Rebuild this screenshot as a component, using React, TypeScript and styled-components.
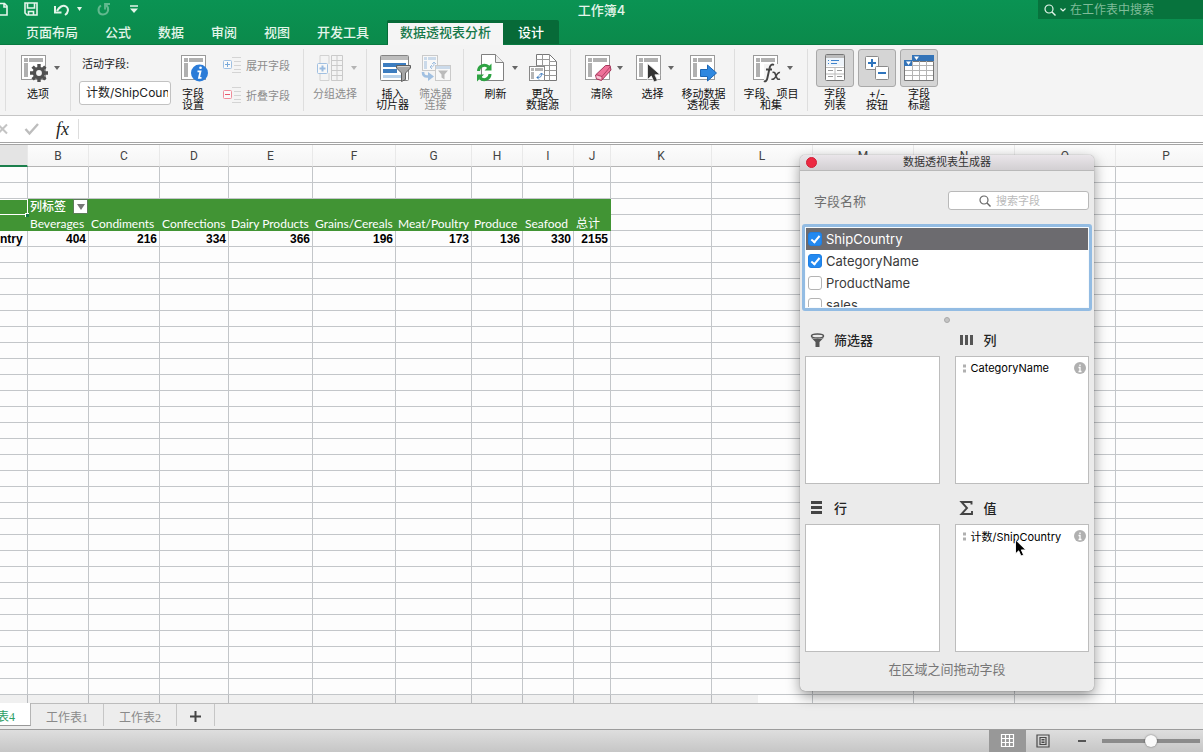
import React from "react";
import styled, { createGlobalStyle, css } from "styled-components";

const CJK = '"Noto Sans CJK SC", sans-serif';
const UI = `Inter, ${CJK}`;

const GlobalStyle = createGlobalStyle`
  *, *::before, *::after { box-sizing: border-box; }
  body { margin: 0; font-family: ${UI}; font-size: 12px; color: #222; }
  button, input { font: inherit; color: inherit; margin: 0; padding: 0; }
  button { border: 0; background: none; }
  svg { display: block; flex: none; overflow: visible; }
`;

const Window = styled.div`
  position: relative;
  display: flex;
  flex-direction: column;
  height: 100vh;
  min-height: 600px;
  overflow: hidden;
  background: #fdfdfd;
`;

/* ---------- title bar and tabs ---------- */

const TopChrome = styled.header`
  background: linear-gradient(#0a9353, #0b8a4b);
  border-bottom: 1px solid #087a41;
  flex: none;
  color: #e4f5ea;
`;

const TitleBar = styled.div`
  display: grid;
  grid-template-columns: 1fr auto 1fr;
  height: 20px;
`;

const QuickAccess = styled.div`
  display: flex;
  align-items: center;
  height: 18px;
`;

const QuickButton = styled.button<{ $width: number; $dim?: boolean }>`
  width: ${(p) => p.$width}px;
  height: 18px;
  display: flex;
  align-items: center;
  opacity: ${(p) => (p.$dim ? 0.4 : 1)};
`;

const DocTitle = styled.h1`
  margin: 0;
  font-size: 13px;
  line-height: 20px;
  font-weight: 500;
`;

const SheetSearch = styled.label`
  justify-self: end;
  display: flex;
  align-items: center;
  gap: 4px;
  width: 165px;
  height: 19px;
  padding-left: 6px;
  background: #07733d;
  input {
    flex: 1;
    min-width: 0;
    border: 0;
    outline: 0;
    background: none;
    font-size: 12px;
    line-height: 18px;
  }
  input::placeholder { color: #7fbc99; opacity: 1; }
`;

const TabRow = styled.nav`
  display: flex;
  height: 24px;
  padding-left: 26px;
  font-size: 13px;
  line-height: 24px;
  font-weight: 500;
`;

const TabList = styled.div`
  display: flex;
  gap: 27px;
  margin-right: 18px;
`;

const Tab = styled.button`
  white-space: nowrap;
`;

const ContextTabs = styled.div`
  display: flex;
  background: #076a38;
  border-left: 1px solid #076a38;
  border-radius: 2px 2px 0 0;
`;

const ContextTab = styled.button<{ $active?: boolean }>`
  padding: 0 ${(p) => (p.$active ? 12 : 15)}px;
  white-space: nowrap;
  color: #fff;
  ${(p) =>
    p.$active &&
    css`
      margin-top: 3px;
      margin-bottom: -1px;
      padding-bottom: 3px;
      line-height: 19px;
      background: #f5f5f5;
      color: #17784a;
    `}
`;

/* ---------- ribbon ---------- */

const Ribbon = styled.div`
  display: flex;
  flex: none;
  height: 71px;
  padding: 4px 0;
  background: #f4f4f4;
  border-bottom: 1px solid #c6c6c6;
`;

const Group = styled.section<{ $width?: number; $start?: number }>`
  display: flex;
  flex: none;
  width: ${(p) => (p.$width ? p.$width + "px" : "auto")};
  justify-content: ${(p) => (p.$start ? "flex-start" : "center")};
  padding-left: ${(p) => p.$start ?? 0}px;
  border-right: ${(p) => (p.$width ? "1px solid #dedede" : "0")};
`;

const Tool = styled.button<{ $width: number; $disabled?: boolean }>`
  display: flex;
  flex-direction: column;
  align-items: center;
  flex: none;
  width: ${(p) => p.$width}px;
  font-size: 11px;
  line-height: 11px;
  white-space: nowrap;
  color: ${(p) => (p.$disabled ? "#8c8c8c" : "#111")};
  svg, i { opacity: ${(p) => (p.$disabled ? 0.45 : 1)}; }
`;

const ToolFace = styled.span<{ $pressed?: boolean }>`
  display: flex;
  align-items: center;
  justify-content: center;
  gap: 7px;
  height: 38px;
  margin-bottom: 2px;
  ${(p) =>
    p.$pressed &&
    css`
      width: 38px;
      background: #d5d5d5;
      border: 1px solid #a9a9a9;
      border-radius: 3px;
    `}
`;

const Caret = styled.i`
  margin-right: -4px;
  border: 3px solid transparent;
  border-top: 4px solid #666;
  border-bottom: 0;
`;

const FieldColumn = styled.label`
  display: flex;
  flex-direction: column;
  width: 92px;
  font-size: 11px;
  line-height: 30px;
  color: #222;
  span { padding-left: 3px; }
  input {
    width: 100%;
    height: 24px;
    margin-top: 2px;
    padding: 0 2px 0 6px;
    border: 1px solid #c2c2c2;
    border-radius: 3px;
    background: #fff;
    font-size: 12px;
  }
`;

const StackedTools = styled.div`
  display: flex;
  flex-direction: column;
  padding-top: 1px;
  margin-left: 8px;
`;

const SmallTool = styled.button`
  display: flex;
  align-items: center;
  gap: 4px;
  height: 30px;
  font-size: 11px;
  color: #8c8c8c;
  white-space: nowrap;
`;

/* ---------- formula bar ---------- */

const FormulaBar = styled.div`
  display: flex;
  align-items: center;
  flex: none;
  height: 29px;
  background: #fff;
  border-bottom: 3px double #a4a4a4;
  button { display: flex; }
  input {
    flex: 1;
    height: 20px;
    margin-left: 7px;
    border: 0;
    border-left: 1px solid #ddd;
    outline: 0;
    background: none;
  }
`;

const FxButton = styled.button`
  width: 15px;
  margin-left: 17px;
  && { font: italic 18px/22px "Liberation Serif", serif; }
  color: #222;
`;

/* ---------- sheet ---------- */

const SheetArea = styled.main`
  position: relative;
  flex: 1;
  min-height: 0;
  overflow: hidden;
`;

const ScrollTrack = styled.div`
  position: absolute;
  left: 0;
  bottom: 0;
  width: 63%;
  height: 8px;
  background: rgba(0, 0, 0, 0.05);
`;

const Grid = styled.table`
  table-layout: fixed;
  width: 1217px;
  border-collapse: separate;
  border-spacing: 0;
  font-family: Lato, ${CJK};
  font-size: 12px;
  line-height: 13px;
`;

const ColHead = styled.th<{ $selected?: boolean }>`
  height: 22px;
  padding: 1px 0 0;
  background: ${(p) => (p.$selected ? "#e4e4e4" : "linear-gradient(#fcfcfc, #f5f5f5)")};
  border-bottom: ${(p) => (p.$selected ? "2px solid #1b7f4c" : "1px solid #b5b5b5")};
  border-right: 1px solid #e9e9e9;
  font-family: Roboto, ${CJK};
  font-weight: 400;
  color: #444;
`;

const Cell = styled.td<{ $filled?: boolean; $flush?: boolean }>`
  height: 16px;
  padding: ${(p) => (p.$flush ? 0 : 2)}px 2px 0;
  border-right: 1px solid #c3c6c9;
  border-bottom: 1px solid #c3c6c9;
  white-space: nowrap;
  ${(p) =>
    p.$filled &&
    css`
      background: #419434;
      border-color: #419434;
      color: #fff;
    `}
`;

const NumberCell = styled(Cell)`
  text-align: right;
  font-family: "Liberation Sans", ${CJK};
  font-weight: 700;
  color: #000;
`;

const RowLabel = styled(NumberCell)`
  padding-left: 0;
  padding-right: 5px;
`;

const ActiveCell = styled(Cell)`
  position: relative;
  border-top: 1px solid #fff;
  border-right: 1px solid #fff;
  border-bottom: 1px solid #fff;
  &::after {
    content: "";
    position: absolute;
    right: -2px;
    bottom: -3px;
    width: 4px;
    height: 4px;
    background: #187a47;
    border-left: 1px solid #fff;
    border-top: 1px solid #fff;
  }
`;

const FilterHead = styled.div`
  display: flex;
  justify-content: space-between;
  align-items: center;
  height: 15px;
  line-height: 15px;
  font-weight: 500;
  margin-right: -2px;
`;

const FilterButton = styled.button`
  display: flex;
  align-items: center;
  justify-content: center;
  width: 15px;
  height: 15px;
  background: #fff;
  border: 1px solid #5c7d58;
  i {
    border: 4px solid transparent;
    border-top: 6px solid #777;
    border-bottom: 0;
  }
`;

/* ---------- bottom bars ---------- */

const SheetTabs = styled.nav`
  display: flex;
  flex: none;
  height: 27px;
  background: #ededed;
  border-top: 1px solid #bcbcbc;
  border-bottom: 1px solid #9c9c9c;
  font-family: "Liberation Serif", ${CJK};
`;

const SheetTab = styled.button<{ $active?: boolean }>`
  height: 22px;
  padding: 5px 15px 0;
  font-size: 12px;
  line-height: 16px;
  color: #8a8a8a;
  border-right: 1px solid #c6c6c6;
  ${(p) =>
    p.$active &&
    css`
      width: 31px;
      height: 23px;
      margin-top: -1px;
      padding: 6px 15px 0 0;
      display: flex;
      justify-content: flex-end;
      white-space: nowrap;
      background: #fff;
      color: #2fa066;
      border-right: 1px solid #b5b5b5;
      border-bottom: 1px solid #999;
    `}
`;

const AddSheet = styled.button`
  display: flex;
  align-items: center;
  justify-content: center;
  width: 38px;
  height: 22px;
  padding-top: 3px;
  border-right: 1px solid #c6c6c6;
`;

const StatusBar = styled.footer`
  display: flex;
  align-items: center;
  justify-content: flex-end;
  flex: none;
  height: 22px;
  padding-right: 3px;
  background: linear-gradient(#dedede, #c6c6c6);
`;

const ViewButton = styled.button<{ $active?: boolean }>`
  display: flex;
  align-items: center;
  justify-content: center;
  width: ${(p) => (p.$active ? 37 : 34)}px;
  height: 22px;
  background: ${(p) => (p.$active ? "#989898" : "none")};
`;

const ZoomOut = styled.button`
  width: 8px;
  height: 2px;
  margin: 0 16px 0 18px;
  background: #555;
`;

const ZoomSlider = styled.input`
  appearance: none;
  width: 98px;
  height: 14px;
  background: linear-gradient(#8b8b8b, #8b8b8b) center / 100% 4px no-repeat;
  &::-webkit-slider-thumb {
    appearance: none;
    width: 12px;
    height: 12px;
    border-radius: 50%;
    background: #fafafa;
    box-shadow: 0 0 2px rgba(0, 0, 0, 0.5);
  }
`;

/* ---------- floating field builder ---------- */

const Builder = styled.aside`
  position: absolute;
  top: 155px;
  right: 109px;
  width: 294px;
  padding-bottom: 12px;
  background: #ebebeb;
  border-radius: 5px;
  box-shadow: 0 0 1px rgba(0, 0, 0, 0.5), 0 5px 14px rgba(0, 0, 0, 0.4);
`;

const BuilderTitle = styled.div`
  display: grid;
  grid-template-columns: 1fr auto 1fr;
  align-items: center;
  height: 16px;
  padding: 0 6px;
  background: linear-gradient(#eae6ea, #d2cfd2);
  border-bottom: 1px solid #b9b9b9;
  border-radius: 5px 5px 0 0;
  h2 {
    margin: 0;
    font-size: 11px;
    line-height: 15px;
    font-weight: 400;
    color: #333;
  }
`;

const CloseButton = styled.button`
  width: 11px;
  height: 11px;
  border-radius: 50%;
  background: #ec2942;
  border: 1px solid #d01e36;
`;

const FieldsHead = styled.div`
  display: flex;
  align-items: center;
  justify-content: space-between;
  height: 59px;
  padding: 0 5px 0 14px;
  font-size: 13px;
  color: #6f6f6f;
`;

const FieldSearch = styled.label`
  display: flex;
  align-items: center;
  justify-content: center;
  gap: 5px;
  width: 141px;
  height: 19px;
  background: #fff;
  border: 1px solid #b9b9b9;
  border-radius: 3px;
  input {
    width: 62px;
    border: 0;
    outline: 0;
    background: none;
    font-size: 11px;
    line-height: 16px;
  }
  input::placeholder { color: #bababa; opacity: 1; }
`;

const FieldList = styled.div`
  height: 87px;
  margin: -6px 2px 0;
  padding: 1px;
  border: 3px solid #93bce3;
  border-radius: 3px;
  background: #f7fafc;
  overflow: hidden;
`;

const FieldViewport = styled.div`
  height: 79px;
  overflow: hidden;
  background: #fff;
`;

const FieldRow = styled.label<{ $selected?: boolean }>`
  display: flex;
  align-items: center;
  gap: 4px;
  height: 22px;
  padding-left: 2px;
  font-size: 13px;
  line-height: 22px;
  background: ${(p) => (p.$selected ? "#6c6b6f" : "#fff")};
  color: ${(p) => (p.$selected ? "#fff" : "#3a3a3a")};
`;

const Check = styled.input`
  appearance: none;
  position: relative;
  width: 14px;
  height: 14px;
  background: #fff;
  border: 1px solid #b4b4b4;
  border-radius: 3px;
  &:checked {
    background: #2389f0;
    border-color: #1f7fe2;
  }
  &:checked::after {
    content: "";
    position: absolute;
    left: 4px;
    top: 1px;
    width: 5px;
    height: 9px;
    border: solid #fff;
    border-width: 0 2px 2px 0;
    transform: rotate(40deg);
  }
`;

const Splitter = styled.div`
  width: 6px;
  height: 6px;
  margin: 6px auto 3px;
  border-radius: 50%;
  background: #c4c4c4;
  border: 1px solid #a9a9a9;
`;

const Zones = styled.div`
  display: grid;
  grid-template-columns: 1fr 1fr;
  column-gap: 15px;
  row-gap: 10px;
  padding: 0 5px;
`;

const Zone = styled.section`
  h3 {
    display: flex;
    align-items: center;
    gap: 9px;
    height: 30px;
    margin: 0;
    padding: 0 0 3px 5px;
    font-size: 13px;
    font-weight: 500;
    color: #222;
  }
`;

const DropBox = styled.div`
  height: 128px;
  background: #fff;
  border: 1px solid #bdbdbd;
`;

const Pill = styled.div`
  display: flex;
  align-items: center;
  height: 22px;
  padding: 0 2px 0 7px;
  font-size: 11px;
  color: #000;
  span { flex: 1; margin-left: 5px; }
  button { display: flex; }
`;

const BuilderHint = styled.p`
  margin: 7px 0 0;
  text-align: center;
  font-size: 13px;
  line-height: 20px;
  color: #777;
`;

const Pointer = styled.svg`
  position: absolute;
  top: 384px;
  left: 215px;
`;

/* ---------- icons ---------- */

const Icon = ({ w = 28, h = 28, children }: { w?: number; h?: number; children: React.ReactNode }) => (
  <svg width={w} height={h} viewBox={`0 0 ${w} ${h}`} fill="none" aria-hidden="true">
    {children}
  </svg>
);

const PivotFrame = () => (
  <>
    <rect x="0.5" y="1.5" width="24" height="24" fill="#fff" stroke="#9a9a9a" />
    <path d="M3 4h4v4H3zM8 4h14v4H8zM3 9h4v14H3z" fill="#b0b0b0" />
  </>
);

const GearPivot = () => (
  <Icon w={26}>
    <PivotFrame />
    <g transform="translate(18 19)" stroke="#505050">
      <circle r="4.6" strokeWidth="3.4" fill="#f4f4f4" />
      <g strokeWidth="3.4">
        {[0, 45, 90, 135].map((a) => (
          <path key={a} d="M0 -9V-5.5M0 5.5V9" transform={`rotate(${a})`} />
        ))}
      </g>
    </g>
  </Icon>
);

const InfoPivot = () => (
  <Icon w={25}>
    <PivotFrame />
    <circle cx="18.500" cy="19" r="8.500" fill="#2b7cd8" />
    <path d="M19.500 13.700h.1" stroke="#fff" strokeWidth="2.600" strokeLinecap="round" />
    <path d="M16.500 17.300h3l-1.500 6.500h2.500" stroke="#fff" strokeWidth="1.800" />
  </Icon>
);

const ExpandIcon = ({ minus }: { minus?: boolean }) => (
  <Icon w={19} h={18}>
    <path d="M9 1.500h9M11 5.500h7M11 9.500h7M11 13.500h7M9 16.500h9" stroke="#d4d4d4" />
    <rect x="0.500" y="4.500" width="8" height="8" rx="1" fill="#fafafa" stroke={minus ? "#f08c9b" : "#9fc0e2"} />
    <path d={minus ? "M2 8.500h5" : "M2 8.500h5M4.500 6v5"} stroke={minus ? "#e8566c" : "#77a8da"} />
  </Icon>
);

const GroupIcon = () => (
  <Icon w={27}>
    <path d="M14.500 1.500h11v25h-11zM20 1.500v25M14.500 6.500h11M14.500 11.500h11M14.500 16.500h11M14.500 21.500h11" stroke="#999" />
    <path d="M3 10V1.500h9V10M3 19v7.500h9V19" stroke="#aaa" />
    <rect x="0.500" y="9.500" width="10" height="10" rx="1" fill="#fff" stroke="#3d82cc" />
    <path d="M2.500 14.500h6M5.500 11.500v6" stroke="#2f78c8" strokeWidth="2" />
  </Icon>
);

const SlicerIcon = () => (
  <Icon w={26}>
    <rect x="0.500" y="1.500" width="28" height="25" rx="1" fill="#fff" stroke="#858585" />
    <path d="M1 2h27v4H1z" fill="#bdbdbd" />
    <path d="M3 9h23v4H3zM3 15h14v4H3z" fill="#3c7dc0" />
    <path d="M3 21h23v3H3z" fill="#b9d2ea" />
    <path d="M16.500 11.500h14v2.500l-5 5v6.500l-4 2V19l-5-5z" fill="#a6a6a6" stroke="#5f5f5f" />
    <path d="M17.500 12.500h12" stroke="#d4d4d4" />
  </Icon>
);

const FilterLinkIcon = () => (
  <Icon w={30}>
    <rect x="1.500" y="1.500" width="15" height="15" fill="#fff" stroke="#999" />
    <path d="M3 3h3v3H3zM7 3h8v3H7zM3 7h3v8H3z" fill="#9abbe0" />
    <path d="M9 13c4 0 4-1 4-5M13 8l-2 2M13 8l2 2M9 13l2-2M9 13l2 2" stroke="#3d82cc" />
    <rect x="14.500" y="11.500" width="15" height="15" fill="#fff" stroke="#999" />
    <path d="M15 12h14v3H15z" fill="#9abbe0" />
    <path d="M17 16.500h10l-3.500 4v5l-3-2v-3z" fill="#777" />
    <path d="M2 18q0 4.500 4 4.500h2" stroke="#3d82cc" strokeWidth="2.600" />
    <path d="M7 18l6 4.500-6 4.500z" fill="#3d82cc" />
  </Icon>
);

const RefreshIcon = () => (
  <Icon>
    <path d="M4.500 0.500h14l8 8v18h-22z" fill="#fff" stroke="#808080" />
    <path d="M18.500 0.500v8h8" fill="#eee" stroke="#808080" />
    <g stroke="#2ea343" strokeWidth="3">
      <path d="M1.500 17c0-5 6-7.500 10-4" />
      <path d="M13 20c0 5-6 7.500-10 4" />
    </g>
    <path d="M14.500 9.500v7h-7zM0 27.500v-7h7z" fill="#2ea343" />
  </Icon>
);

const SourceIcon = () => (
  <Icon>
    <path d="M7.500 0.500h13l7 7v19h-20z" fill="#fff" stroke="#777" />
    <path d="M20.500 0.500v7h7M7.500 5.500h13M7.500 11.500h20M7.500 16.500h20M7.500 21.500h20M13.500 0.500v26M20.500 7.500v19" stroke="#999" />
    <rect x="0.500" y="12.500" width="15" height="14" fill="#fff" stroke="#888" />
    <path d="M2 14h3v3H2zM6 14h8v3H6zM2 18h3v7H2z" fill="#b5b5b5" />
    <path d="M8 23.500c4 0 4.500-1 4.500-4M12.500 19l-2 2M12.500 19l2 2M8 23.500l2-2M8 23.500l2 2" stroke="#3777bd" />
  </Icon>
);

const EraserIcon = () => (
  <Icon w={25}>
    <PivotFrame />
    <path d="M10.500 21 20.500 11.500h4.500l1 4.500-9.500 10.500-5-1.500z" fill="#ee7199" stroke="#a3375b" />
    <path d="M11 20.500l6 2L25.500 12.500M17 22.500v3.500" stroke="#a3375b" strokeWidth=".8" />
    <path d="M11.300 21.500l5 1.600v2.300l-4.500-1.200z" fill="#f9c6d5" />
  </Icon>
);

const SelectIcon = () => (
  <Icon w={25}>
    <PivotFrame />
    <path d="M11.500 9.500v16l3.800-3.500 2.700 6 3.500-1.500-2.600-5.700h5.300z" fill="#333" stroke="#f4f4f4" strokeWidth=".8" />
  </Icon>
);

const MoveIcon = () => (
  <Icon w={27}>
    <PivotFrame />
    <path d="M10.500 15.500h7v-4.500l9 8-9 8v-4.500h-7z" fill="#2f88e0" stroke="#1c66b4" />
  </Icon>
);

const FxPivotIcon = () => (
  <Icon w={27}>
    <PivotFrame />
    <rect x="11" y="10" width="17" height="18" fill="#f4f4f4" />
    <path d="M21 10.800c-2.500-1-4 .7-4.500 3.700l-2 9c-.500 3-2 4.500-3.500 3.500M13 15.500h6" stroke="#444" strokeWidth="1.900" />
    <path d="M19.500 18.500c2.500-1 2.500 1 3.500 3.500s1.500 4 4 3M27 18.500c-2-.500-3 1.500-4 3.500s-2.500 4-4.500 3" stroke="#444" strokeWidth="1.600" />
  </Icon>
);

const FieldListIcon = () => (
  <Icon w={22}>
    <rect x="1.500" y="0.500" width="19" height="26" rx="1" fill="#fff" stroke="#777" />
    <path d="M2 1h18v3H2z" fill="#bbb" />
    <path d="M2 4h18v8H2z" fill="#eef4fa" />
    <path d="M4 6.500h1M7 6.500h8M4 9.500h1M7 9.500h6" stroke="#3d82cc" />
    <path d="M2 13.500h18M11 14v12M2 20h18" stroke="#bbb" />
    <path d="M4 16.500h5M13 16.500h5M4 22.500h5M13 22.500h5" stroke="#999" />
  </Icon>
);

const PlusMinusIcon = () => (
  <Icon w={24} h={24}>
    <rect x="0.500" y="0.500" width="13" height="13" rx="1" fill="#fff" stroke="#8a8a8a" />
    <path d="M3 7h8M7 3v8" stroke="#2f75bd" strokeWidth="2" />
    <rect x="10.500" y="10.500" width="13" height="13" rx="1" fill="#fff" stroke="#8a8a8a" />
    <path d="M13 17h8" stroke="#2f75bd" strokeWidth="2" />
  </Icon>
);

const HeadersIcon = () => (
  <Icon w={30} h={26}>
    <path d="M0.500 6.500h29v19h-29z" fill="#fff" stroke="#777" />
    <path d="M8.500 6v19M15.500 6v19M22.500 6v19M1 10.500h28M1 15.500h28M1 20.500h28" stroke="#b4b4b4" />
    <path d="M0 5h8v6H0zM8 0h22v6H8z" fill="#3474b8" />
    <path d="M2 6.500h5l-2.500 3.500zM10 1.500h5L12.500 5z" fill="#fff" />
  </Icon>
);

const Magnifier = ({ color }: { color: string }) => (
  <Icon w={12} h={12}>
    <circle cx="5" cy="5" r="4" stroke={color} strokeWidth="1.200" />
    <path d="M8 8l3.500 3.500" stroke={color} strokeWidth="1.400" />
  </Icon>
);

const InfoDot = () => (
  <Icon w={12} h={12}>
    <circle cx="6" cy="6" r="6" fill="#b0b0b0" />
    <path d="M6 2.500v1.500M4.500 5.500H6V9.500M4.500 9.500h3" stroke="#fff" strokeWidth="1.300" />
  </Icon>
);

const Grip = () => (
  <Icon w={3} h={9}>
    <path d="M0 0.500h3v3H0zM0 5.500h3v3H0z" fill="#b0b0b0" />
  </Icon>
);

/* ---------- data ---------- */

const columns = [
  ["", 28], ["B", 61], ["C", 71], ["D", 69], ["E", 84], ["F", 83], ["G", 76], ["H", 51],
  ["I", 51], ["J", 37], ["K", 101], ["L", 101], ["M", 101], ["N", 101], ["O", 101], ["P", 101],
] as const;

const categories = [
  "Beverages", "Condiments", "Confections", "Dairy Products", "Grains/Cereals",
  "Meat/Poultry", "Produce", "Seafood", "总计",
];
const counts = [404, 216, 334, 366, 196, 173, 136, 330, 2155];

const blanks = (n: number) => Array.from({ length: n }, (_, i) => <Cell key={"blank" + i} />);

const RibbonTool = ({
  width, icon, lines, caret, disabled, pressed,
}: {
  width: number; icon: React.ReactNode; lines: string[]; caret?: boolean; disabled?: boolean; pressed?: boolean;
}) => (
  <Tool $width={width} $disabled={disabled} type="button" aria-pressed={pressed}>
    <ToolFace $pressed={pressed}>
      {icon}
      {caret && <Caret />}
    </ToolFace>
    {lines.map((l) => (
      <span key={l}>{l}</span>
    ))}
  </Tool>
);

const fields = [
  { name: "ShipCountry", checked: true, selected: true },
  { name: "CategoryName", checked: true },
  { name: "ProductName", checked: false },
  { name: "sales", checked: false },
];

export default function App() {
  return (
    <Window>
      <GlobalStyle />
      <TopChrome>
        <TitleBar>
          <QuickAccess>
            <QuickButton $width={24} aria-label="新建">
              <Icon w={8} h={14}>
                <path d="M0 1.500h4.500l2.500 2.500v9H0M4 1.500V5h3" stroke="#e4f5ea" strokeWidth="1.600" />
              </Icon>
            </QuickButton>
            <QuickButton $width={30} aria-label="保存">
              <Icon w={14} h={14}>
                <path d="M1 1h12v12H3l-2-2zM3.500 1v5h7V1M4.500 13V9.500h5V13" stroke="#e4f5ea" strokeWidth="1.600" />
              </Icon>
            </QuickButton>
            <QuickButton $width={23} aria-label="撤销">
              <Icon w={16} h={13}>
                <path d="M3 8C5 4 9 1.500 12 3.500s2.500 6-1 8.500" stroke="#e4f5ea" strokeWidth="2" />
                <path d="M1 3v6.500h6.500" stroke="#e4f5ea" strokeWidth="2" />
              </Icon>
            </QuickButton>
            <QuickButton $width={20} aria-label="撤销列表">
              <Icon w={5} h={4}>
                <path d="M0 0h5L2.500 4z" fill="#e4f5ea" />
              </Icon>
            </QuickButton>
            <QuickButton $width={33} $dim aria-label="恢复">
              <Icon w={13} h={14}>
                <path d="M4 3.500C0 6 1 12.500 6 12.500s7-6 3-9.500" stroke="#e4f5ea" strokeWidth="2" />
                <path d="M8 7.500V2h5" stroke="#e4f5ea" strokeWidth="1.800" />
              </Icon>
            </QuickButton>
            <QuickButton $width={10} aria-label="自定义">
              <Icon w={8} h={8}>
                <path d="M0 1h8" stroke="#e4f5ea" strokeWidth="1.500" />
                <path d="M0 3.500h8L4 8z" fill="#e4f5ea" />
              </Icon>
            </QuickButton>
          </QuickAccess>
          <DocTitle>工作簿4</DocTitle>
          <SheetSearch>
            <Magnifier color="#e4f5ea" />
            <Icon w={6} h={4}>
              <path d="M.500.500L3 3 5.500.500" stroke="#e4f5ea" strokeWidth="1.200" />
            </Icon>
            <input aria-label="在工作表中搜索" placeholder="在工作表中搜索" />
          </SheetSearch>
        </TitleBar>
        <TabRow>
          <TabList>
            {["页面布局", "公式", "数据", "审阅", "视图", "开发工具"].map((t) => (
              <Tab key={t}>{t}</Tab>
            ))}
          </TabList>
          <ContextTabs>
            <ContextTab $active>数据透视表分析</ContextTab>
            <ContextTab>设计</ContextTab>
          </ContextTabs>
        </TabRow>
      </TopChrome>

      <Ribbon>
        <Group $width={6} />
        <Group $width={65}>
          <RibbonTool width={50} icon={<GearPivot />} lines={["选项"]} caret />
        </Group>
        <Group $width={233} $start={8}>
          <FieldColumn>
            <span>活动字段:</span>
            <input defaultValue="计数/ShipCountry" />
          </FieldColumn>
          <RibbonTool width={44} icon={<InfoPivot />} lines={["字段", "设置"]} />
          <StackedTools>
            <SmallTool>
              <ExpandIcon />
              展开字段
            </SmallTool>
            <SmallTool>
              <ExpandIcon minus />
              折叠字段
            </SmallTool>
          </StackedTools>
        </Group>
        <Group $width={63}>
          <RibbonTool width={50} icon={<GroupIcon />} lines={["分组选择"]} caret disabled />
        </Group>
        <Group $width={97} $start={4}>
          <RibbonTool width={43} icon={<SlicerIcon />} lines={["插入", "切片器"]} />
          <RibbonTool width={43} icon={<FilterLinkIcon />} lines={["筛选器", "连接"]} disabled />
        </Group>
        <Group $width={107} $start={8}>
          <RibbonTool width={47} icon={<RefreshIcon />} lines={["刷新"]} caret />
          <RibbonTool width={47} icon={<SourceIcon />} lines={["更改", "数据源"]} />
        </Group>
        <Group $width={164}>
          <RibbonTool width={51} icon={<EraserIcon />} lines={["清除"]} caret />
          <RibbonTool width={51} icon={<SelectIcon />} lines={["选择"]} caret />
          <RibbonTool width={51} icon={<MoveIcon />} lines={["移动数据", "透视表"]} />
        </Group>
        <Group $width={73}>
          <RibbonTool width={60} icon={<FxPivotIcon />} lines={["字段、项目", "和集"]} caret />
        </Group>
        <Group $start={6}>
          <RibbonTool width={42} icon={<FieldListIcon />} lines={["字段", "列表"]} pressed />
          <RibbonTool width={42} icon={<PlusMinusIcon />} lines={["+/-", "按钮"]} pressed />
          <RibbonTool width={42} icon={<HeadersIcon />} lines={["字段", "标题"]} pressed />
        </Group>
      </Ribbon>

      <FormulaBar>
        <button aria-label="取消">
          <Icon w={24} h={12}>
            <path d="M-2 1.500L7 10.500M-2 10.500L7 1.500" stroke="#c4c4c4" strokeWidth="2" />
          </Icon>
        </button>
        <button aria-label="输入">
          <Icon w={15} h={12}>
            <path d="M1.500 6l4 4.500L14 1" stroke="#bdbdbd" strokeWidth="2.400" />
          </Icon>
        </button>
        <FxButton>fx</FxButton>
        <input aria-label="编辑栏" />
      </FormulaBar>

      <SheetArea>
        <Grid>
          <colgroup>
            {columns.map(([name, width]) => (
              <col key={name} width={width} />
            ))}
          </colgroup>
          <thead>
            <tr>
              {columns.map(([name]) => (
                <ColHead key={name} $selected={name === ""}>
                  {name}
                </ColHead>
              ))}
            </tr>
          </thead>
          <tbody>
            <tr>{blanks(16)}</tr>
            <tr>{blanks(16)}</tr>
            <tr>
              <ActiveCell $filled />
              <Cell $filled $flush>
                <FilterHead>
                  列标签
                  <FilterButton aria-label="筛选列标签">
                    <i />
                  </FilterButton>
                </FilterHead>
              </Cell>
              {categories.slice(1).map((c) => (
                <Cell key={c} $filled />
              ))}
              {blanks(6)}
            </tr>
            <tr>
              <Cell $filled />
              {categories.map((c) => (
                <Cell key={c} $filled>
                  {c}
                </Cell>
              ))}
              {blanks(6)}
            </tr>
            <tr>
              <RowLabel>ntry</RowLabel>
              {counts.map((n, i) => (
                <NumberCell key={i}>{n}</NumberCell>
              ))}
              {blanks(6)}
            </tr>
            {Array.from({ length: 29 }, (_, r) => (
              <tr key={r}>{blanks(16)}</tr>
            ))}
          </tbody>
        </Grid>
        <ScrollTrack />
      </SheetArea>

      <SheetTabs>
        <SheetTab $active>表4</SheetTab>
        <SheetTab>工作表1</SheetTab>
        <SheetTab>工作表2</SheetTab>
        <AddSheet aria-label="新建工作表">
          <Icon w={11} h={11}>
            <path d="M0 5.500h11M5.500 0v11" stroke="#444" strokeWidth="2" />
          </Icon>
        </AddSheet>
      </SheetTabs>

      <StatusBar>
        <ViewButton $active aria-label="普通">
          <Icon w={14} h={14}>
            <path d="M.500.500h12v12H.500zM4.500.500v12M8.500.500v12M.500 4.500h12M.500 8.500h12" stroke="#fff" strokeWidth="1.200" />
          </Icon>
        </ViewButton>
        <ViewButton aria-label="页面布局">
          <Icon w={14} h={14}>
            <path d="M1 1h12v12H1zM4 3.500h6v7H4zM5.500 5.500h3M5.500 7h3M5.500 8.500h3" stroke="#4a4a4a" strokeWidth="1.200" />
          </Icon>
        </ViewButton>
        <ZoomOut aria-label="缩小" />
        <ZoomSlider type="range" min={0} max={100} defaultValue={50} aria-label="缩放" />
      </StatusBar>

      <Builder>
        <BuilderTitle>
          <CloseButton aria-label="关闭" />
          <h2>数据透视表生成器</h2>
        </BuilderTitle>
        <FieldsHead>
          字段名称
          <FieldSearch>
            <Magnifier color="#666" />
            <input aria-label="搜索字段" placeholder="搜索字段" />
          </FieldSearch>
        </FieldsHead>
        <FieldList>
          <FieldViewport>
            {fields.map((f) => (
              <FieldRow key={f.name} $selected={f.selected}>
                <Check type="checkbox" defaultChecked={f.checked} />
                {f.name}
              </FieldRow>
            ))}
          </FieldViewport>
        </FieldList>
        <Splitter />
        <Zones>
          <Zone>
            <h3>
              <Icon w={15} h={14}>
                <ellipse cx="7.500" cy="3" rx="6" ry="2" stroke="#555" strokeWidth="1.500" />
                <path d="M1 4.500c3 2 10 2 13 0L9.500 9v5h-4V9z" fill="#555" />
              </Icon>
              筛选器
            </h3>
            <DropBox />
          </Zone>
          <Zone>
            <h3>
              <Icon w={15} h={12}>
                <path d="M0 1h3v10H0zM5 1h3v10H5zM10 1h3v10h-3z" fill="#555" />
              </Icon>
              列
            </h3>
            <DropBox>
              <Pill>
                <Grip />
                <span>CategoryName</span>
                <button aria-label="CategoryName 信息">
                  <InfoDot />
                </button>
              </Pill>
            </DropBox>
          </Zone>
          <Zone>
            <h3>
              <Icon w={15} h={13}>
                <path d="M1 0h11v3H1zM1 5h11v3H1zM1 10h11v3H1z" fill="#444" />
              </Icon>
              行
            </h3>
            <DropBox />
          </Zone>
          <Zone>
            <h3>
              <Icon w={15} h={14}>
                <path d="M11.500 3.500V1H1.500L7 7l-5.500 6h10.500v-3" stroke="#444" strokeWidth="1.900" />
              </Icon>
              值
            </h3>
            <DropBox>
              <Pill>
                <Grip />
                <span>计数/ShipCountry</span>
                <button aria-label="计数/ShipCountry 信息">
                  <InfoDot />
                </button>
              </Pill>
            </DropBox>
          </Zone>
        </Zones>
        <BuilderHint>在区域之间拖动字段</BuilderHint>
        <Pointer width="12" height="18" viewBox="0 0 12 18" aria-hidden="true">
          <path d="M.500.800v14l3.200-3 2.300 5.200 2.600-1.100-2.300-5h4.500z" fill="#000" stroke="#fff" strokeWidth=".9" />
        </Pointer>
      </Builder>
    </Window>
  );
}
